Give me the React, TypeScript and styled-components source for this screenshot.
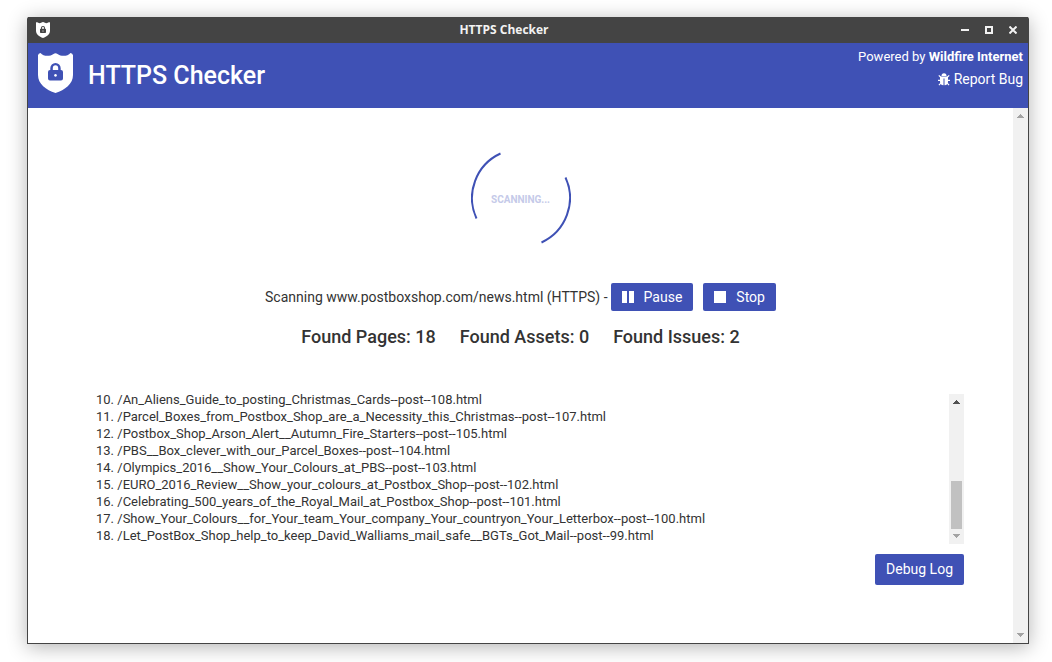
import React from "react";
import styled, { createGlobalStyle } from "styled-components";

const indigo = "#3f51b5";
const chrome = "#444444";

const GlobalStyle = createGlobalStyle`
  * { box-sizing: border-box; }
  body {
    margin: 0;
    background: #ffffff;
    color: #333333;
    font: 14px/20px Roboto, sans-serif;
  }
`;

const Desktop = styled.div`
  display: flex;
  min-height: 100vh;
  padding: 17px 23px 18px 27px;
`;

const AppWindow = styled.div`
  display: flex;
  flex: 1;
  flex-direction: column;
  min-width: 0;
  border: 1px solid ${chrome};
  border-top: 0;
  border-radius: 2px 2px 0 0;
  box-shadow: 0 3px 20px rgba(0, 0, 0, 0.3);
`;

const TitleBar = styled.div`
  display: flex;
  align-items: center;
  justify-content: space-between;
  height: 26px;
  padding: 0 7px 0 8px;
  background: ${chrome};
  color: #f2f2f2;
`;

const WindowTitle = styled.span`
  padding-left: 1px;
  font: bold 12px/16px "Open Sans", sans-serif;
`;

const WindowControls = styled.div`
  display: flex;
  gap: 8px;
`;

const WindowButton = styled.button`
  display: flex;
  align-items: center;
  justify-content: center;
  width: 16px;
  height: 16px;
  padding: 0;
  border: 0;
  background: none;
  color: inherit;
`;

const Header = styled.header`
  display: flex;
  align-items: flex-start;
  gap: 15px;
  height: 65px;
  padding: 4px 5px 0 10px;
  background: ${indigo};
  color: #ffffff;
`;

const Brand = styled.h1`
  flex: 1;
  margin: 0;
  padding-top: 13px;
  font-size: 25px;
  font-weight: 500;
  line-height: 32px;
`;

const LogoSlot = styled.div`
  display: flex;
  padding-top: 6px;
`;

const HeaderLinks = styled.div`
  display: flex;
  flex-direction: column;
  align-items: flex-end;
  gap: 2px;
`;

const HeaderLink = styled.a<{ $small?: boolean }>`
  display: flex;
  align-items: center;
  gap: 4px;
  color: #ffffff;
  font-size: ${(p) => (p.$small ? 13 : 14)}px;
  text-decoration: none;
  white-space: pre;
`;

const Body = styled.div`
  display: flex;
  flex: 1;
  background: #ffffff;
`;

const Content = styled.main`
  display: flex;
  flex: 1;
  flex-direction: column;
  min-width: 0;
  padding-top: 40px;
`;

const Spinner = styled.div`
  display: grid;
  place-items: center;
  align-self: center;
  width: 100px;
  height: 100px;

  > * {
    grid-area: 1 / 1;
  }
`;

const SpinnerLabel = styled.span`
  padding-top: 4px;
  color: #c5cae9;
  font-size: 10px;
  font-weight: 700;
  line-height: 12px;
`;

const Status = styled.div`
  display: flex;
  align-items: center;
  justify-content: center;
  margin-top: 35px;
`;

const StatusText = styled.span`
  margin-right: 3px;
`;

const Button = styled.button<{ $tall?: boolean }>`
  display: flex;
  align-items: center;
  gap: 10px;
  height: ${(p) => (p.$tall ? 31 : 28)}px;
  padding: ${(p) => (p.$tall ? "0 11px 1px" : "0 11px")};
  border: 0;
  border-radius: 2px;
  background: ${indigo};
  color: #ffffff;
  font: inherit;

  & + & {
    margin-left: 10px;
  }
`;

const Counts = styled.div`
  display: flex;
  justify-content: center;
  gap: 24px;
  margin-top: 14px;
  font-size: 18px;
  font-weight: 500;
  line-height: 24px;
`;

const Results = styled.section`
  display: flex;
  flex-direction: column;
  gap: 10px;
  margin: 45px 49px 58px 68px;
`;

const LogPanel = styled.div`
  display: flex;
  height: 150px;
`;

const PageList = styled.ol`
  display: flex;
  flex: 1;
  flex-direction: column;
  justify-content: flex-end;
  min-width: 0;
  margin: 0;
  padding: 0;
  font-size: 13px;
  line-height: 17px;
  list-style: none;
`;

const PageItem = styled.li`
  flex: none;
  white-space: nowrap;
`;

const Actions = styled.div`
  display: flex;
  justify-content: flex-end;
`;

const ScrollTrack = styled.div`
  display: flex;
  flex: none;
  flex-direction: column;
  align-items: center;
  justify-content: space-between;
  width: 15px;
  padding: 6px 0;
  background: #f1f1f1;
`;

const ScrollThumb = styled.div`
  width: 11px;
  height: 48px;
  margin: auto 0 5px;
  background: #c1c1c1;
`;

const Shield = ({ width, height, lock }: { width: number; height: number; lock: string }) => (
  <svg width={width} height={height} viewBox="0 0 35 40" aria-hidden="true">
    <path
      fill="#ffffff"
      d="M2.500 0C5.500 3.600 12 3.600 15.500 .9Q17.500 -.6 19.500 .9C23 3.600 29.500 3.600 32.500 0Q34.600 .3 35 2.300V22C35 31 27 37 17.500 40C8 37 0 31 0 22V2.300Q.4 .3 2.500 0Z"
    />
    <path
      fill={lock}
      fillRule="evenodd"
      d="M12.300 17V15.300a5.200 5.300 0 0 1 10.400 0V17H23q2 0 2 2v6.500q0 2-2 2H12q-2 0-2-2V19q0-2 2-2ZM14.800 17h5.400v-1.700a2.700 3 0 0 0-5.400 0ZM17.500 21a1.400 1.400 0 1 0 .01 0Z"
    />
  </svg>
);

const Arrow = ({ down, color }: { down?: boolean; color: string }) => (
  <svg width="7" height="4" viewBox="0 0 7 4" shapeRendering="crispEdges" aria-hidden="true">
    <path fill={color} d={down ? "M0 0h7v1H6v1H5v1H4v1H3V3H2V2H1V1H0Z" : "M0 4h7V3H6V2H5V1H4V0H3v1H2v1H1v1H0Z"} />
  </svg>
);

const Bug = () => (
  <svg width="12" height="13" viewBox="0 0 12 13" aria-hidden="true">
    <path fill="#ffffff" d="M3.500 2.900Q3.500 .2 6 .2T8.500 2.900Z" />
    <path fill="#ffffff" d="M2 3.600h8V8.500Q10 12 6.500 12.300V5.500h-1v6.800Q2 12 2 8.500Z" />
    <path stroke="#ffffff" strokeWidth="1.200" fill="none" d="M.8 2.300 3 4.500M11.200 2.300 9 4.500M0 7.300h3M9 7.300h3M.9 12.100 3.300 9.700M11.100 12.100 8.700 9.700" />
  </svg>
);

const pages = [
  "/An_Aliens_Guide_to_posting_Christmas_Cards--post--108.html",
  "/Parcel_Boxes_from_Postbox_Shop_are_a_Necessity_this_Christmas--post--107.html",
  "/Postbox_Shop_Arson_Alert__Autumn_Fire_Starters--post--105.html",
  "/PBS__Box_clever_with_our_Parcel_Boxes--post--104.html",
  "/Olympics_2016__Show_Your_Colours_at_PBS--post--103.html",
  "/EURO_2016_Review__Show_your_colours_at_Postbox_Shop--post--102.html",
  "/Celebrating_500_years_of_the_Royal_Mail_at_Postbox_Shop--post--101.html",
  "/Show_Your_Colours__for_Your_team_Your_company_Your_countryon_Your_Letterbox--post--100.html",
  "/Let_PostBox_Shop_help_to_keep_David_Walliams_mail_safe__BGTs_Got_Mail--post--99.html",
];

export default function App() {
  return (
    <Desktop>
      <GlobalStyle />
      <AppWindow>
        <TitleBar>
          <Shield width={14} height={16} lock={chrome} />
          <WindowTitle>HTTPS Checker</WindowTitle>
          <WindowControls>
            <WindowButton aria-label="Minimize">
              <svg width="8" height="8"><path fill="currentColor" d="M0 3h8v2H0z" /></svg>
            </WindowButton>
            <WindowButton aria-label="Maximize">
              <svg width="8" height="8"><path fill="none" stroke="currentColor" strokeWidth="2" d="M1 1h6v6H1z" /></svg>
            </WindowButton>
            <WindowButton aria-label="Close">
              <svg width="8" height="8"><path stroke="currentColor" strokeWidth="2" d="M.5 .5l7 7M7.500 .5l-7 7" /></svg>
            </WindowButton>
          </WindowControls>
        </TitleBar>
        <Header>
          <LogoSlot>
            <Shield width={35} height={40} lock={indigo} />
          </LogoSlot>
          <Brand>HTTPS Checker</Brand>
          <HeaderLinks>
            <HeaderLink href="#wildfire" $small>
              <span>Powered by <b>Wildfire Internet</b></span>
            </HeaderLink>
            <HeaderLink href="#report">
              <Bug />
              Report Bug
            </HeaderLink>
          </HeaderLinks>
        </Header>
        <Body>
          <Content>
            <Spinner>
              <svg width="100" height="100" viewBox="0 0 100 100" aria-hidden="true">
                <path fill="none" stroke={indigo} strokeWidth="2" d="M29.500 5.500A49 49 0 0 0 5.500 70.500M94.500 29.500A49 49 0 0 1 70.500 94.500" />
              </svg>
              <SpinnerLabel>SCANNING...</SpinnerLabel>
            </Spinner>
            <Status>
              <StatusText>Scanning www.postboxshop.com/news.html (HTTPS) -</StatusText>
              <Button>
                <svg width="12" height="12" aria-hidden="true"><path fill="#ffffff" d="M0 0h5v12H0zM7 0h5v12H7z" /></svg>
                Pause
              </Button>
              <Button>
                <svg width="12" height="12" aria-hidden="true"><path fill="#ffffff" d="M0 0h12v12H0z" /></svg>
                Stop
              </Button>
            </Status>
            <Counts>
              <span>Found Pages: 18</span>
              <span>Found Assets: 0</span>
              <span>Found Issues: 2</span>
            </Counts>
            <Results>
              <LogPanel>
                <PageList start={10}>
                  {pages.map((page, i) => (
                    <PageItem key={page}>{`${i + 10}. ${page}`}</PageItem>
                  ))}
                </PageList>
                <ScrollTrack>
                  <Arrow color="#505050" />
                  <ScrollThumb />
                  <Arrow down color="#a3a3a3" />
                </ScrollTrack>
              </LogPanel>
              <Actions>
                <Button $tall>Debug Log</Button>
              </Actions>
            </Results>
          </Content>
          <ScrollTrack>
            <Arrow color="#a3a3a3" />
            <Arrow down color="#a3a3a3" />
          </ScrollTrack>
        </Body>
      </AppWindow>
    </Desktop>
  );
}
